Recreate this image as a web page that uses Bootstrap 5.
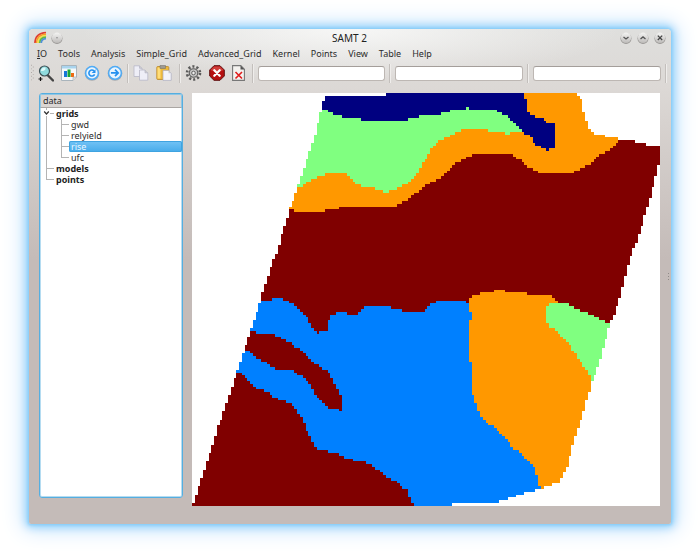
<!DOCTYPE html>
<html lang="en">
<head>
<meta charset="utf-8">
<meta name="viewport" content="width=device-width, initial-scale=1">
<title>SAMT 2</title>
<link href="https://cdn.jsdelivr.net/npm/bootstrap@5.3.0/dist/css/bootstrap.min.css" rel="stylesheet">
<style>
body { background: #fff; color: #2b2b2b; font: 9px/12px "Noto Sans", "Open Sans", sans-serif; padding: 29px; }
.app-window { min-height: calc(100vh - 58px); border-radius: 4px 4px 2px 2px;
  background: radial-gradient(ellipse 270px 52px at 50% 0, #f7f7f6, #f7f7f600), linear-gradient(#dfdfdd, #dcd8d5 60px, #c4bbb8 230px);
  box-shadow: 0 0 3px 1px #86cdf8, 0 0 9px 3px #8fd0fb, 0 0 22px 5px #c3e0fb; }
.title-bar { height: 17px; padding: 0 5px; }
.title-bar h1 { font-size: 10px; line-height: 16px; color: #222; }
.title-bar svg, .tools svg { display: block; }
.window-buttons { gap: 5px; }
.bare { border: 0; background: none; padding: 0; }
.menu-bar { padding: 1px 8px 0; height: 16px; gap: 11px; line-height: 14px; }
.menu-bar .nav-link { padding: 0; color: #2b2b2b; }
.tools { height: 22px; padding-left: 2px; }
.tools .bare { margin-right: 7px; }
.tool-sep { width: 2px; height: 19px; border-left: 1px solid #c3bfbc; border-right: 1px solid #efedeb; }
.tools .form-control { height: 15px; min-height: 0; padding: 0 4px; font-size: 9px; border: 1px solid #bdb7b3; border-top-color: #a49e9a; border-radius: 3px; background: #fff; min-width: 0; }
.work { padding: 9px 1px 18px 10px; }
.tree-pane { width: 144px; margin-right: 9px; border: 1px solid #55aee0; border-radius: 3px; background: #fff; box-shadow: inset 0 0 0 1px #b5dcf1; }
.tree-head { height: 14px; padding: 0 2px; background: #dad6d3; border: 1px solid #8fc6e4; border-bottom-color: #aaa6a3; border-radius: 2px 2px 0 0; line-height: 12px; }
.tree, .tree ul { list-style: none; margin: 0; padding: 0; line-height: 11px; }
.tree { padding-left: 6px; }
.tree li { position: relative; padding-left: 10px; }
.tree li::before { content: ""; position: absolute; left: 0; top: 0; width: 8px; height: 6px; border-left: 1px solid #b4b4b4; border-bottom: 1px solid #b4b4b4; }
.tree li:not(:last-child)::after { content: ""; position: absolute; left: 0; top: 0; bottom: 0; border-left: 1px solid #b4b4b4; }
.tree ul { padding-left: 5px; }
.tree a { display: block; color: #2b2b2b; text-decoration: none; }
.tree > li > a { font-weight: 700; color: #222; }
.tree ul a { margin-left: -2px; padding-left: 2px; }
.tree a.current { color: #e8f6ff; border-radius: 2px; background: linear-gradient(#73c3f5, #46abea); box-shadow: inset 0 0 0 1px #3fa3e0; }
.twisty { position: absolute; z-index: 1; left: -3px; top: 2px; background: #fff; }
.map-pane { min-width: 0; background: #fff; }
.map-pane svg { display: block; width: 100%; height: 100%; min-height: 412px; }
.grip { width: 10px; margin-top: 180px; }
</style>
<script src="https://cdn.jsdelivr.net/npm/bootstrap@5.3.0/dist/js/bootstrap.bundle.min.js"></script>
</head>
<body>
<main class="app-window d-flex flex-column">
  <header class="title-bar d-flex align-items-center">
    <svg width="13" height="13" viewBox="0 0 13 13" fill="none" stroke-width="1.7" aria-hidden="true"><path d="M1 12C1 6 5 2 12 1.5" stroke="#df3e32"/><path d="M2.6 12C2.6 7 6 3.6 12 3.1" stroke="#f79b27"/><path d="M4.1 12c0-4 3-7 8-7.3" stroke="#f5df48"/><path d="M5.7 12c0-3 2-5.500 6.300-5.800" stroke="#62b846"/><path d="M7.300 12c0-2 1.400-4 4.700-4.300" stroke="#4f91d7"/></svg>
    <button class="bare ms-1" type="button" aria-label="Window menu"><svg width="12" height="12" viewBox="0 0 12 12"><circle cx="6" cy="6.400" r="5.500" fill="#9a9896"/><circle cx="6" cy="5.700" r="5.200" fill="url(#knob)"/><circle cx="6" cy="5.800" r=".8" fill="#888"/></svg></button>
    <h1 class="flex-fill text-center m-0 fw-normal ps-3">SAMT 2</h1>
    <div class="window-buttons d-flex">
      <button class="bare" type="button" aria-label="Minimize"><svg width="12" height="12" viewBox="0 0 12 12"><defs><linearGradient id="knob" x2="0" y2="1"><stop stop-color="#f4f4f3"/><stop offset="1" stop-color="#bebcba"/></linearGradient></defs><circle cx="6" cy="6.400" r="5.500" fill="#9a9896"/><circle cx="6" cy="5.700" r="5.200" fill="url(#knob)"/><path d="M3.500 4.900 6 7l2.500-2.100" fill="none" stroke="#555" stroke-width="1.300"/></svg></button>
      <button class="bare" type="button" aria-label="Maximize"><svg width="12" height="12" viewBox="0 0 12 12"><circle cx="6" cy="6.400" r="5.500" fill="#9a9896"/><circle cx="6" cy="5.700" r="5.200" fill="url(#knob)"/><path d="M3.500 7 6 4.900 8.500 7" fill="none" stroke="#555" stroke-width="1.300"/></svg></button>
      <button class="bare" type="button" aria-label="Close"><svg width="12" height="12" viewBox="0 0 12 12"><circle cx="6" cy="6.400" r="5.500" fill="#9a9896"/><circle cx="6" cy="5.700" r="5.200" fill="url(#knob)"/><path d="m3.800 3.600 4.400 4.400m0-4.400L3.800 8" fill="none" stroke="#444" stroke-width="1.300"/></svg></button>
    </div>
  </header>
  <nav class="menu-bar nav flex-nowrap" aria-label="Main menu">
    <a class="nav-link" href="#"><u>I</u>O</a><a class="nav-link" href="#">Tools</a><a class="nav-link" href="#">Analysis</a><a class="nav-link" href="#">Simple_Grid</a><a class="nav-link" href="#">Advanced_Grid</a><a class="nav-link" href="#">Kernel</a><a class="nav-link" href="#">Points</a><a class="nav-link" href="#">View</a><a class="nav-link" href="#">Table</a><a class="nav-link" href="#">Help</a>
  </nav>
  <div class="tools d-flex align-items-center" role="toolbar" aria-label="Tools">
    <svg class="me-1" width="3" height="20" viewBox="0 0 3 20" fill="#aaa5a1" aria-hidden="true"><path d="M0 1h1v1H0zM2 3h1v1H2zM0 5h1v1H0zM2 7h1v1H2zM0 9h1v1H0zM2 11h1v1H2zM0 13h1v1H0zM2 15h1v1H2zM0 17h1v1H0z"/></svg>
    <button class="bare" type="button" aria-label="Zoom"><svg width="16" height="17" viewBox="0 0 16 17"><path d="m9.500 10 5.500 5.500" stroke="#444" stroke-width="2.400" stroke-linecap="round"/><circle cx="6.500" cy="6" r="5" fill="#8fdadd" stroke="#3d5055" stroke-width="1.200"/><path d="M3 6c0-2.500 2-4 4.500-3.500C8 5 6 6.500 3 6z" fill="#dffafa"/><path d="M.5 14h4M2.500 12v4" stroke="#111" stroke-width="1.200"/></svg></button>
    <button class="bare" type="button" aria-label="Chart"><svg width="16" height="16" viewBox="0 0 16 16"><path d="M.5.500h15V12L12 15.500H.5z" fill="#f6f9fb" stroke="#a9b4bc"/><path d="M1 1h14v2.500H1z" fill="#a9d4ee"/><path d="M3 6h3v6H3z" fill="#1676d9"/><path d="M6.500 4.500h3V12h-3z" fill="#18a638"/><path d="M10 8h3v4h-3z" fill="#ee6b12"/><path d="M12 15.500V12h3.500" fill="#ddd" stroke="#aaa" stroke-width=".6"/></svg></button>
    <button class="bare" type="button" aria-label="Reload"><svg width="16" height="16" viewBox="0 0 16 16"><circle cx="8" cy="8.500" r="7.300" fill="#a4a9ad"/><circle cx="8" cy="7.900" r="7.100" fill="#4eabf6"/><circle cx="8" cy="7.900" r="5.600" fill="#e9f5ff"/><path d="M10.600 9.300A3 3 0 1 1 10 5.900" fill="none" stroke="#2490ef" stroke-width="1.600"/><path d="M11.500 4.200v3.900H7.700z" fill="#2490ef"/></svg></button>
    <button class="bare me-1" type="button" aria-label="Go"><svg width="16" height="16" viewBox="0 0 16 16"><circle cx="8" cy="8.500" r="7.300" fill="#a4a9ad"/><circle cx="8" cy="7.900" r="7.100" fill="#4eabf6"/><circle cx="8" cy="7.900" r="5.600" fill="#e9f5ff"/><path d="M3.900 7.900H11M8 4.700l3.200 3.200L8 11.100" fill="none" stroke="#2490ef" stroke-width="1.700"/></svg></button>
    <span class="tool-sep me-1"></span>
    <button class="bare" type="button" aria-label="Copy"><svg width="16" height="16" viewBox="0 0 16 16" fill="#eeeef7" stroke="#b7b7c7" stroke-width=".8"><path d="M1 .8h5.500L9 3.300v8.200H1z"/><path d="M6.500.8v2.500H9" fill="#ccc"/><path d="M6.500 5H12l2.800 2.800v7.400H6.500z"/><path d="M12 5v2.800h2.800" fill="#ccc"/></svg></button>
    <button class="bare" type="button" aria-label="Paste"><svg width="16" height="16" viewBox="0 0 16 16"><rect x=".8" y="1.500" width="12" height="13" rx="1" fill="#edb93c" stroke="#bb8726" stroke-width=".8"/><path d="M1.500 2.500h3v11h-3z" fill="#ffdd78"/><path d="M4 .5h5.500v3H4z" fill="#9d9a92" stroke="#6f6b62" stroke-width=".5"/><path d="M7 5.500h5.500l2.700 2.700v7.200H7z" fill="#f3f3fa" stroke="#aaaabe" stroke-width=".7"/><path d="M12.500 5.500v2.700h2.700" fill="#ccc"/></svg></button>
    <span class="tool-sep me-1"></span>
    <button class="bare" type="button" aria-label="Settings"><svg width="17" height="16" viewBox="0 0 17 16" fill="none"><circle cx="8.500" cy="8" r="6.500" stroke="#5a5a5a" stroke-width="2.600" stroke-dasharray="2.100 2"/><circle cx="8.500" cy="8" r="4.300" fill="#c2c2c2" stroke="#5a5a5a" stroke-width="1.100"/><circle cx="8.500" cy="8" r="1.800" fill="#eee" stroke="#666"/></svg></button>
    <button class="bare" type="button" aria-label="Stop"><svg width="16" height="16" viewBox="0 0 16 16"><path d="M5 .7h6L15.300 5v6L11 15.300H5L.7 11V5z" fill="#b50f10" stroke="#5f1010"/><path d="M5.200 1.400h5.600L14.500 5c-4 2-9 2-13 0z" fill="#e25a55" opacity=".6"/><path d="m5.300 5.300 5.400 5.400m0-5.400-5.400 5.400" stroke="#fff" stroke-width="2.300" stroke-linecap="round"/></svg></button>
    <button class="bare" type="button" aria-label="Close document"><svg width="13" height="16" viewBox="0 0 13 16"><path d="M.6.600h8.200l3.600 3.600v11.200H.6z" fill="#f4f2ef" stroke="#777" stroke-width="1.100"/><path d="M8.500.600v4h4" fill="#555"/><path d="m3.500 7 6.500 6.500m0-6.500-6.500 6.500" stroke="#e01c1c" stroke-width="1.600"/></svg></button>
    <span class="tool-sep me-1"></span><input class="form-control flex-fill w-auto" type="text" aria-label="First value">
    <span class="tool-sep ms-1 me-1"></span><input class="form-control flex-fill w-auto" type="text" aria-label="Second value">
    <span class="tool-sep ms-1 me-1"></span><input class="form-control flex-fill w-auto" type="text" aria-label="Third value">
    <span class="tool-sep ms-1 me-1"></span>
  </div>
  <div class="work d-flex flex-fill">
    <aside class="tree-pane flex-shrink-0 mb-2">
      <div class="tree-head">data</div>
      <ul class="tree">
        <li><svg class="twisty" width="7" height="6" viewBox="0 0 7 6" aria-hidden="true"><path d="m1.200 1.500 2.300 2.500 2.300-2.500" fill="none" stroke="#333" stroke-width="1.200"/></svg><a href="#">grids</a>
          <ul><li><a href="#">gwd</a></li><li><a href="#">relyield</a></li><li><a class="current" href="#" aria-current="true">rise</a></li><li><a href="#">ufc</a></li></ul>
        </li>
        <li><a href="#">models</a></li>
        <li><a href="#">points</a></li>
      </ul>
    </aside>
    <section class="map-pane flex-fill"><svg id="grid-map" viewBox="0 0 169 149" preserveAspectRatio="none" role="img" aria-label="Map of grid rise"></svg></section>
    <svg class="grip flex-shrink-0" height="7" viewBox="0 0 10 7" fill="#8f8a87" aria-hidden="true"><path d="M8 0h1v1H8zM8 3h1v1H8zM8 6h1v1H8z"/></svg>
  </div>
</main>
<script>
// Class outlines in map units; later regions overlay earlier ones.
const origin = [192, 93], extent = [468, 412], cells = [169, 149];
const field = "325,95 385,95 386,92 574,92 578,96 582,100 584,112 586,120 590,131 594,134 606,136 621,139 633,141 645,144 661,145 661,158 659,163 650,198 640,232 630,258 620,298 610,325 600,360 592,382 583,413 573,443 567,467 560,482 545,487 520,494 500,501 467,503 454,503 453,501 452,504 420,505 420,506 192,506 193,503 205,467 217,430 237,371 245,348 251,330 258,308 261,298 272,265 280,242 290,208 298,187 308,157 317,128 323,105";
const regions = [
 ["#800000", field],
 ["#ff9800", "280,209 292,209 297,211 324,211 325,209 338,208 340,206 383,206 385,208 387,206 397,205 407,200 420,190 430,182 442,177 453,165 467,157 475,153 510,153 520,160 530,168 542,173 572,173 580,168 592,163 600,154 613,148 622,138 640,80 300,80"],
 ["#80ff80", "285,190 297,189 303,185 313,179 327,174 328,173 346,173 355,182 363,186 372,187 385,192 397,188 408,183 420,170 422,165 428,157 433,145 443,139 453,134 463,129 488,129 488,131 502,131 508,134 515,132 522,131 522,80 300,80"],
 ["#000080", "300,80 322,109 333,114 342,117 360,118 361,120 408,120 408,118 423,116 440,114 442,112 455,110 466,110 467,107 469,109 491,109 502,113 507,117 513,121 522,131 528,135 537,145 545,149 548,150 552,149 555,147 555,125 550,124 542,119 535,116 527,112 527,101 525,98 525,80"],
 ["#ff9800", "466,304 473,295 482,293 494,291 495,289 504,289 505,292 527,292 528,294 549,295 557,301 565,306 592,345 620,350 600,480 540,495 466,495"],
 ["#80ff80", "550,303 563,303 572,306 587,313 597,317 607,322 610,325 625,330 600,384 592,382 587,370 580,360 570,345 558,332 550,327 547,320 547,307"],
 ["#0080ff", "250,301 270,300 275,297 280,297 288,302 295,304 307,317 312,327 317,333 322,330 327,330 328,320 332,314 340,311 347,312 348,314 357,313 365,305 391,305 392,308 402,308 403,311 420,311 425,310 430,304 438,300 444,300 446,302 448,300 463,300 468,304 469,310 472,313 472,318 469,322 469,360 472,362 472,390 475,400 480,415 488,423 493,425 507,440 513,448 520,451 530,462 536,470 538,482 541,487 541,506 413,506 410,497 407,490 397,481 387,477 380,470 368,463 362,461 352,459 335,453 317,449 313,443 308,433 302,418 292,404 277,398 268,392 257,388 240,371 220,371"],
 ["#800000", "240,330 251,330 257,333 270,333 280,337 297,347 313,362 323,368 330,373 335,383 340,393 342,397 342,410 337,409 328,407 317,396 307,380 302,376 292,370 275,369 268,363 255,357 247,349 235,349"]
];
const parse = s => s.split(" ").map(p => p.split(",").map(Number));
const inside = (pts, x, y) => {
  let hit = false;
  for (let i = 0, j = pts.length - 1; i < pts.length; j = i++) {
    const [ax, ay] = pts[i], [bx, by] = pts[j];
    if ((ay > y) !== (by > y) && x < (bx - ax) * (y - ay) / (by - ay) + ax) hit = !hit;
  }
  return hit;
};
const shapes = regions.map(([color, s]) => [color, parse(s)]), bounds = parse(field), runs = {};
for (let r = 0; r < cells[1]; r++) {
  const y = origin[1] + (r + .5) * extent[1] / cells[1];
  let start = 0, last = "";
  for (let c = 0; c <= cells[0]; c++) {
    const x = origin[0] + (c + .5) * extent[0] / cells[0];
    let color = "";
    if (c < cells[0] && inside(bounds, x, y)) for (const [k, pts] of shapes) if (inside(pts, x, y)) color = k;
    if (color !== last) {
      if (last) runs[last] = (runs[last] || "") + `M${start} ${r}H${c}V${r + 1}H${start}z`;
      start = c; last = color;
    }
  }
}
const map = document.getElementById("grid-map");
for (const [color, d] of Object.entries(runs)) {
  const path = document.createElementNS("http://www.w3.org/2000/svg", "path");
  path.setAttribute("d", d);
  path.setAttribute("fill", color);
  path.setAttribute("shape-rendering", "crispEdges");
  map.append(path);
}
</script>
</body>
</html>
